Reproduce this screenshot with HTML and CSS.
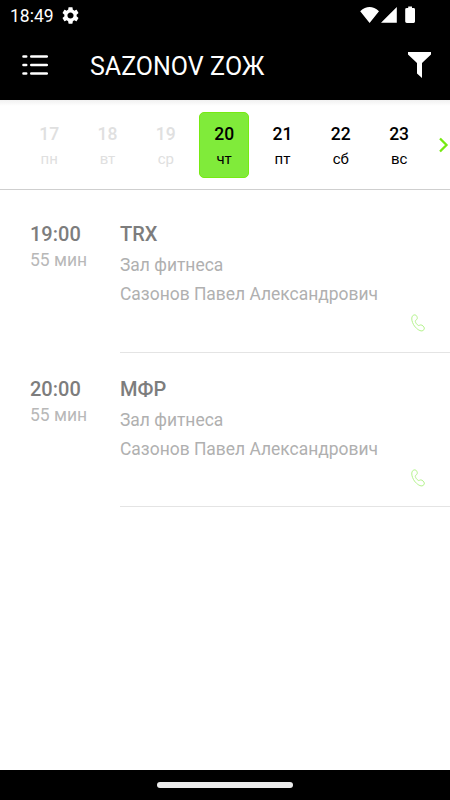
FILE: index.html
```
<!DOCTYPE html>
<html lang="ru">
<head>
<meta charset="utf-8">
<title>SAZONOV ZОЖ</title>
<link rel="stylesheet" href="styles.css">
</head>
<body>
<div class="screen">
  <div class="status">
    <span class="clock">18:49</span>
    <svg class="gear" viewBox="2 2 20 20"><path d="M19.14 12.94c.04-.3.06-.61.06-.94 0-.32-.02-.64-.07-.94l2.03-1.58c.18-.14.23-.41.12-.61l-1.92-3.32c-.12-.22-.37-.29-.59-.22l-2.39.96c-.5-.38-1.03-.7-1.62-.94l-.36-2.54c-.04-.24-.24-.41-.48-.41h-3.84c-.24 0-.43.17-.47.41l-.36 2.54c-.59.24-1.13.57-1.62.94l-2.39-.96c-.22-.08-.47 0-.59.22L2.74 8.87c-.12.21-.08.47.12.61l2.03 1.58c-.05.3-.09.63-.09.94s.02.64.07.94l-2.03 1.58c-.18.14-.23.41-.12.61l1.92 3.32c.12.22.37.29.59.22l2.39-.96c.5.38 1.03.7 1.62.94l.36 2.54c.05.24.24.41.48.41h3.84c.24 0 .44-.17.47-.41l.36-2.54c.59-.24 1.13-.56 1.62-.94l2.39.96c.22.08.47 0 .59-.22l1.92-3.32c.12-.22.07-.47-.12-.61l-2.01-1.58zM12 15.6c-1.98 0-3.6-1.62-3.6-3.6s1.62-3.6 3.6-3.6 3.6 1.62 3.6 3.6-1.62 3.6-3.6 3.6z"/></svg>
    <svg class="signals" viewBox="0 0 56 18"><path d="M0.2 5.2Q9.5-3 19 5.2L9.6 17zM36.8 1v15.8H21zM46 3.4Q46 2 47.2 2H48.200V0.400H52V2h1.600Q55 2 55 3.400V15.600Q55 17 53.600 17H46.800Q45.200 17 45.200 15.600V3.400Q45.200 2 46.600 2z"/></svg>
  </div>
  <header class="bar">
    <svg class="menu" viewBox="0 0 26 22"><path d="M1.5 2.500h2.700M9.300 2.500h15.500M1.500 11h2.700M9.300 11h15.500M1.500 19.500h2.700M9.300 19.500h15.500"/></svg>
    <h1 class="title">SAZONOV ZОЖ</h1>
    <svg class="filter" viewBox="0 0 23 26"><path d="M0 0h23v2.500l-9 8.500v15l-5-4.500V11L0 2.500z"/></svg>
  </header>
  <nav class="week">
    <div class="day past"><b>17</b><span>пн</span></div>
    <div class="day past"><b>18</b><span>вт</span></div>
    <div class="day past"><b>19</b><span>ср</span></div>
    <div class="day selected"><b>20</b><span>чт</span></div>
    <div class="day"><b>21</b><span>пт</span></div>
    <div class="day"><b>22</b><span>сб</span></div>
    <div class="day"><b>23</b><span>вс</span></div>
    <svg class="next" viewBox="0 0 10 16"><path d="M1 1.500L7.500 8 1 14.500"/></svg>
  </nav>
  <main class="list">
    <article class="lesson">
      <div class="when"><b>19:00</b><span>55 мин</span></div>
      <div class="info">
        <h2>TRX</h2><p>Зал фитнеса</p><p>Сазонов Павел Александрович</p>
        <svg class="phone" viewBox="0 0 14 18"><path d="M1.300 2.200C2.200.9 4 .5 4.900 1.200 6.300 2.500 6.700 4.300 5.900 5.300 5 6.300 4 6.300 4.300 7.500 4.700 9.100 6 10.600 7.200 11.400 8.200 12 8.500 10.900 9.800 10.900 11.300 11 13 12.600 13.300 14 13.500 15.300 12.500 16.600 11 16.900 8.500 17.200 4.700 14.300 2.600 10.700 1 8 .1 4.200 1.300 2.200z"/></svg>
      </div>
    </article>
    <article class="lesson">
      <div class="when"><b>20:00</b><span>55 мин</span></div>
      <div class="info">
        <h2>МФР</h2><p>Зал фитнеса</p><p>Сазонов Павел Александрович</p>
        <svg class="phone" viewBox="0 0 14 18"><path d="M1.300 2.200C2.200.9 4 .5 4.900 1.200 6.300 2.500 6.700 4.300 5.900 5.300 5 6.300 4 6.300 4.300 7.500 4.700 9.100 6 10.600 7.200 11.400 8.200 12 8.500 10.900 9.800 10.900 11.300 11 13 12.600 13.300 14 13.500 15.300 12.500 16.600 11 16.900 8.500 17.200 4.700 14.300 2.600 10.700 1 8 .1 4.200 1.300 2.200z"/></svg>
      </div>
    </article>
  </main>
  <footer class="gesture"><i></i></footer>
</div>
</body>
</html>
```

FILE: styles.css
```
* { box-sizing: border-box; margin: 0; }
body { font-family: Roboto, "Liberation Sans", sans-serif; background: #fff; }
svg { display: block; }
.screen { width: 450px; height: 800px; display: flex; flex-direction: column; overflow: hidden; }
.status { height: 30px; background: #000; color: #fff; display: flex; align-items: center; padding: 0 34px 0 10px; }
.clock { font-size: 17.5px; line-height: 30px; width: 52px; padding-top: 1px; }
.gear { width: 17px; height: 17px; fill: #fff; }
.signals { width: 56px; height: 18px; fill: #fff; margin-left: auto; margin-top: -1px; }
.bar { height: 70px; background: #000; color: #fff; display: flex; align-items: center; padding: 0 19px 0 22px; }
.menu { width: 26px; height: 22px; fill: none; stroke: #fff; stroke-width: 2.6; stroke-linecap: round; }
.title { font-size: 25px; font-weight: 400; line-height: 30px; margin-left: 42px; padding-top: 4px; }
.filter { width: 23px; height: 26px; fill: #fff; margin-left: auto; }
.week { height: 90px; display: grid; grid-template-columns: repeat(7, 58.33px) 10px; padding: 11.5px 0 0 20px; border-bottom: 1px solid #cfcfcf; background: linear-gradient(#f1f1f1, #fff 6px); }
.day { width: 50px; height: 66.5px; justify-self: center; display: flex; flex-direction: column; align-items: center; padding-top: 11px; color: #000; }
.day b { font-size: 17.5px; font-weight: 500; line-height: 22px; }
.day span { font-size: 15px; line-height: 20px; margin-top: 4px; }
.past { color: #e0e0e0; }
.selected { background: #80eb3a; border: 1px solid #76ea12; border-radius: 5px; padding-top: 10px; }
.next { width: 10px; height: 16px; margin: 25px 0 0 10.5px; fill: none; stroke: #76ea12; stroke-width: 2.300; }
.list { flex: 1; padding-top: 8px; }
.lesson { height: 154.6px; display: flex; padding-left: 30px; }
.when { width: 90px; padding-top: 24.4px; }
.when b, .info h2 { display: block; font-size: 20px; font-weight: 500; line-height: 24px; color: #7d7d7d; }
.when span { display: block; font-size: 17.5px; line-height: 24px; margin-top: 2px; color: #b8b8b8; }
.info { flex: 1; padding-top: 24.4px; border-bottom: 1px solid #e4e4e4; }
.info p { font-size: 17.45px; line-height: 28.700px; color: #b0b0b0; }
.info h2 { margin-bottom: 5px; }
.phone { width: 14px; height: 18px; margin: 5.5px 25px 0 auto; fill: none; stroke: #b4f38c; stroke-width: 1; }
.gesture { height: 30px; background: #000; display: flex; align-items: center; justify-content: center; }
.gesture i { width: 136px; height: 6px; border-radius: 3px; background: #ebebeb; }
```
